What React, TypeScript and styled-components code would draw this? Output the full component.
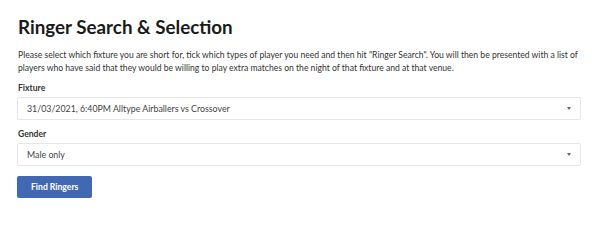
import React from "react";
import styled, { createGlobalStyle } from "styled-components";

const GlobalStyle = createGlobalStyle`
  body {
    margin: 0;
    background: #ffffff;
    font-family: Lato, "Open Sans", sans-serif;
    color: #212529;
  }
`;

const Page = styled.div`
  display: flex;
  flex-direction: column;
  padding: 14px 19px 0 17px;
`;

const Title = styled.h1`
  margin: 0 0 9px 1px;
  font-size: 18.8px;
  font-weight: 700;
  line-height: 26px;
  color: #1b1b1b;
`;

const Intro = styled.p`
  margin: 0 0 8px 1px;
  font-size: 8.6px;
  line-height: 12.6px;
  color: #333333;
`;

const Field = styled.div`
  display: flex;
  flex-direction: column;
  margin-bottom: 8px;
`;

const Label = styled.label`
  margin: 0 0 3px 1px;
  font-size: 8.6px;
  font-weight: 700;
  line-height: 12px;
  color: #333333;
`;

const SelectBox = styled.div`
  display: flex;
  align-items: center;
  height: 21px;
  padding: 0 10px 0 9px;
  border: 1px solid #e6e6e6;
  border-radius: 2px;
  font-size: 8.8px;
  color: #444444;
`;

const Caret = styled.span`
  margin-left: auto;
  margin-right: -1px;
  width: 0;
  height: 0;
  border-left: 2.5px solid transparent;
  border-right: 2.5px solid transparent;
  border-top: 3px solid #666666;
`;

const Button = styled.button`
  align-self: flex-start;
  margin-top: 2px;
  height: 22px;
  padding: 0 14px;
  border: none;
  border-radius: 2px;
  background: #4169b3;
  color: #ffffff;
  font-family: Lato, sans-serif;
  font-size: 8.6px;
  font-weight: 700;
`;

export default function App() {
  return (
    <>
      <GlobalStyle />
      <Page>
        <Title>Ringer Search &amp; Selection</Title>
        <Intro>
          Please select which fixture you are short for, tick which types of
          player you need and then hit "Ringer Search". You will then be
          presented with a list of players who have said that they would be
          willing to play extra matches on the night of that fixture and at
          that venue.
        </Intro>
        <Field>
          <Label>Fixture</Label>
          <SelectBox>
            31/03/2021, 6:40PM Alltype Airballers vs Crossover
            <Caret />
          </SelectBox>
        </Field>
        <Field>
          <Label>Gender</Label>
          <SelectBox>
            Male only
            <Caret />
          </SelectBox>
        </Field>
        <Button>Find Ringers</Button>
      </Page>
    </>
  );
}
